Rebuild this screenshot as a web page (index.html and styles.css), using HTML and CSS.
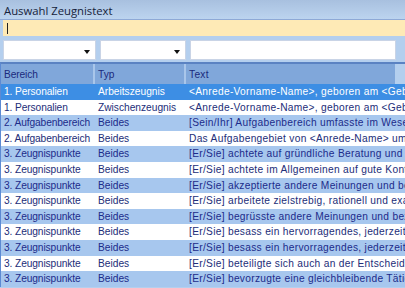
FILE: index.html
```html
<!DOCTYPE html>
<html lang="de">
<head>
    <meta charset="UTF-8">
    <title>Auswahl Zeugnistext</title>
    <link rel="stylesheet" href="styles.css">
</head>
<body>
    <!-- Title bar -->
    <div class="titlebar">Auswahl Zeugnistext</div>

    <!-- Search field -->
    <div class="search-row">
        <div class="search"><span class="caret"></span></div>
    </div>

    <!-- Filters -->
    <div class="filters">
        <div class="combo combo-bereich"><span class="arrow"></span></div>
        <div class="combo combo-typ"><span class="arrow"></span></div>
        <div class="combo combo-text"></div>
    </div>

    <!-- Grid -->
    <div class="grid">
        <div class="grid-head">
            <div class="cell c1">Bereich</div>
            <div class="cell c2">Typ</div>
            <div class="cell c3">Text</div>
        </div>
        <div class="row selected">
            <div class="cell c1">1. Personalien</div>
            <div class="cell c2">Arbeitszeugnis</div>
            <div class="cell c3">&lt;Anrede-Vorname-Name&gt;, geboren am &lt;Geburtsdatum&gt;</div>
        </div>
        <div class="row">
            <div class="cell c1">1. Personalien</div>
            <div class="cell c2">Zwischenzeugnis</div>
            <div class="cell c3">&lt;Anrede-Vorname-Name&gt;, geboren am &lt;Geburtsdatum&gt;</div>
        </div>
        <div class="row alt">
            <div class="cell c1">2. Aufgabenbereich</div>
            <div class="cell c2">Beides</div>
            <div class="cell c3">[Sein/Ihr] Aufgabenbereich umfasste im Wesentlichen</div>
        </div>
        <div class="row">
            <div class="cell c1">2. Aufgabenbereich</div>
            <div class="cell c2">Beides</div>
            <div class="cell c3">Das Aufgabengebiet von &lt;Anrede-Name&gt; umfasste</div>
        </div>
        <div class="row alt">
            <div class="cell c1">3. Zeugnispunkte</div>
            <div class="cell c2">Beides</div>
            <div class="cell c3">[Er/Sie] achtete auf gründliche Beratung und Aufmerksamkeit</div>
        </div>
        <div class="row">
            <div class="cell c1">3. Zeugnispunkte</div>
            <div class="cell c2">Beides</div>
            <div class="cell c3">[Er/Sie] achtete im Allgemeinen auf gute Kontakte</div>
        </div>
        <div class="row alt">
            <div class="cell c1">3. Zeugnispunkte</div>
            <div class="cell c2">Beides</div>
            <div class="cell c3">[Er/Sie] akzeptierte andere Meinungen und bezog</div>
        </div>
        <div class="row">
            <div class="cell c1">3. Zeugnispunkte</div>
            <div class="cell c2">Beides</div>
            <div class="cell c3">[Er/Sie] arbeitete zielstrebig, rationell und exakt</div>
        </div>
        <div class="row alt">
            <div class="cell c1">3. Zeugnispunkte</div>
            <div class="cell c2">Beides</div>
            <div class="cell c3">[Er/Sie] begrüsste andere Meinungen und bezog</div>
        </div>
        <div class="row">
            <div class="cell c1">3. Zeugnispunkte</div>
            <div class="cell c2">Beides</div>
            <div class="cell c3">[Er/Sie] besass ein hervorragendes, jederzeit verfügbares</div>
        </div>
        <div class="row alt">
            <div class="cell c1">3. Zeugnispunkte</div>
            <div class="cell c2">Beides</div>
            <div class="cell c3">[Er/Sie] besass ein hervorragendes, jederzeit abrufbares</div>
        </div>
        <div class="row">
            <div class="cell c1">3. Zeugnispunkte</div>
            <div class="cell c2">Beides</div>
            <div class="cell c3">[Er/Sie] beteiligte sich auch an der Entscheidungsfindung</div>
        </div>
        <div class="row alt">
            <div class="cell c1">3. Zeugnispunkte</div>
            <div class="cell c2">Beides</div>
            <div class="cell c3">[Er/Sie] bevorzugte eine gleichbleibende Tätigkeit</div>
        </div>
    </div>
</body>
</html>
```

FILE: styles.css
```css
/* Base */
* {
    margin: 0;
    padding: 0;
    box-sizing: border-box;
}

body {
    width: 405px;
    height: 288px;
    overflow: hidden;
    background-color: #b4cfee;
    font-family: 'Liberation Sans', Arial, sans-serif;
    font-size: 10.2px;
}

/* Title bar */
.titlebar {
    height: 20px;
    padding: 3px 0 0 4px;
    background: linear-gradient(#a8c0df, #bcd4ef);
    border-bottom: 1px solid #8ea9d6;
    color: #16223a;
    font-family: 'Open Sans', 'Noto Sans', sans-serif;
    font-size: 11.3px;
}

/* Search */
.search-row {
    padding-left: 3px;
}

.search {
    height: 16px;
    background-color: #feeab6;
    padding: 3px 0 0 4px;
}

.caret {
    display: block;
    width: 1px;
    height: 11px;
    background-color: #222;
}

/* Filters */
.filters {
    display: flex;
    gap: 4px;
    padding: 4px 0 2px 3px;
    height: 26px;
}

.combo {
    position: relative;
    height: 20px;
    background-color: #fff;
    border: 1px solid #c9d4e6;
}

.combo-bereich {
    width: 93px;
}

.combo-typ {
    width: 86px;
}

.combo-text {
    width: 206px;
}

.arrow {
    position: absolute;
    right: 5px;
    top: 9px;
    border-left: 3px solid transparent;
    border-right: 3px solid transparent;
    border-top: 4px solid #111;
}

/* Grid */
.grid {
    border-top: 2px solid #5a82c2;
    border-left: 1px solid #5c8ad3;
}

.grid-head {
    display: flex;
    height: 20px;
    color: #1b2a7c;
}

.grid-head .cell {
    background-color: #80a7da;
    border-right: 2px solid #a9c6ea;
    line-height: 20px;
    padding-top: 1px;
}

.grid-head .c3 {
    width: 209px;
    flex: none;
    border-right: none;
}

.row {
    display: flex;
    height: 15.6px;
    line-height: 15.6px;
    background-color: #fff;
    color: #222d78;
}

.row.alt {
    background-color: #a7c7ee;
    color: #1c2b8a;
}

.row.selected {
    background-color: #3d8ee4;
    color: #fff;
}

.cell {
    padding-left: 3px;
    white-space: nowrap;
    overflow: hidden;
}

.c1 {
    width: 94px;
    letter-spacing: -0.1px;
}

.c2 {
    width: 91px;
}

.c3 {
    flex: 1;
    letter-spacing: 0.3px;
}
```
